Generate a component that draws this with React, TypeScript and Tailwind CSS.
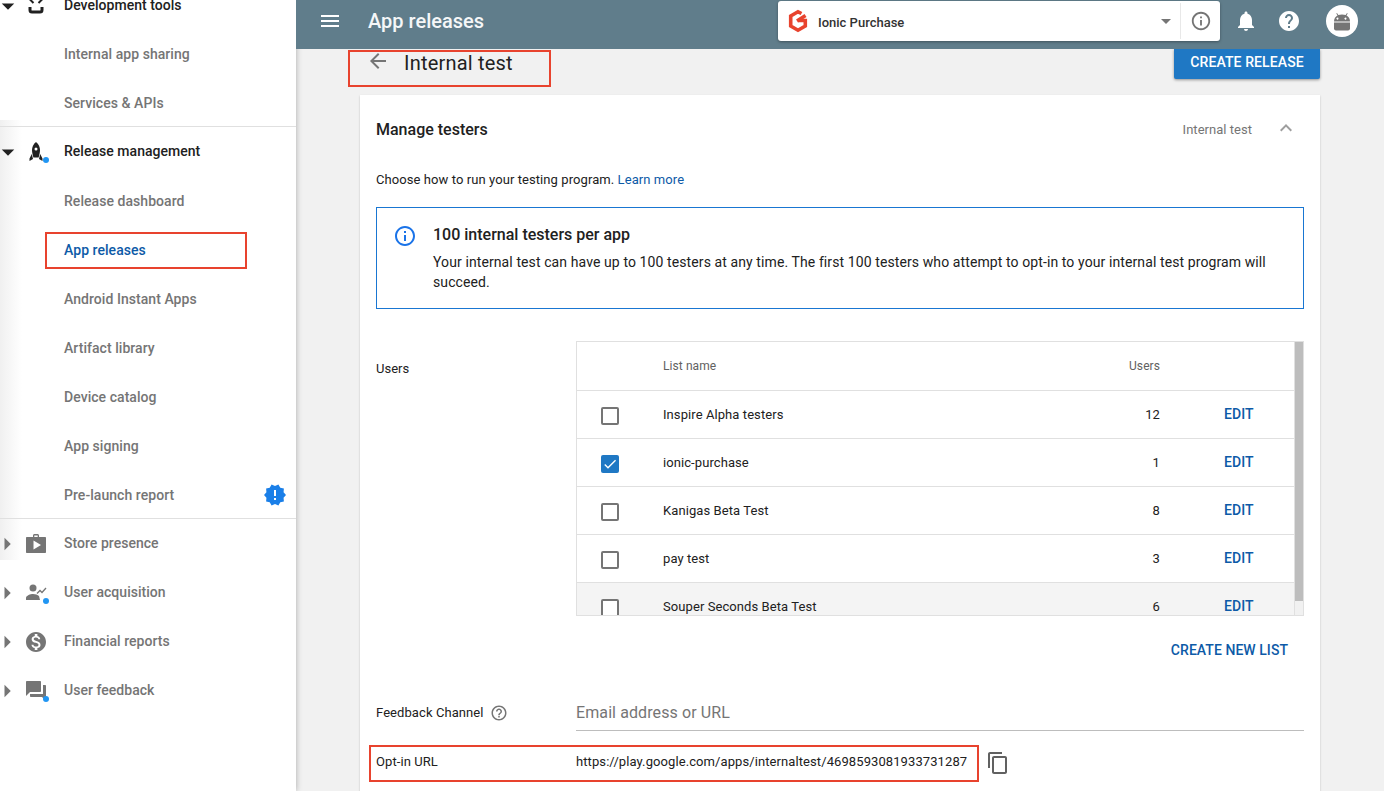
import React from "react";
import {
  MdMenu, MdArrowBack, MdNotifications, MdHelp, MdInfoOutline, MdContentCopy,
  MdMonetizationOn, MdForum, MdKeyboardArrowUp, MdArrowDropDown, MdArrowRight,
  MdNewReleases, MdHelpOutline, MdCheck,
} from "react-icons/md";

const Dot = () => <span className="absolute right-[-1px] bottom-[1px] w-[6px] h-[6px] rounded-full bg-[#2196f3]" />;

const Rocket = () => (
  <svg viewBox="0 0 24 24" className="w-6 h-6 text-[#212121]" fill="currentColor">
    <path d="M12 2c2.800 2.200 4 5.200 4 8 0 2.500-.7 5-1.400 7.500H9.400C8.700 15 8 12.500 8 10c0-2.800 1.200-5.800 4-8z" />
    <path d="M7.800 14 5.500 18.500 5.500 21 9 19zM16.200 14 18.500 18.500 18.500 21 15 19z" />
    <circle cx="12" cy="9" r="1.500" fill="#fff" />
  </svg>
);
const Code = () => (
  <svg viewBox="0 0 24 24" className="w-6 h-6 text-[#212121]" fill="none" stroke="currentColor" strokeWidth="2">
    <path d="M9.500 1 5.500 5l4 4M14.500 1l4 4-4 4" />
    <path d="M6 13v3a2 2 0 0 0 2 2h8a2 2 0 0 0 2-2v-3" strokeWidth="3" />
  </svg>
);
const Store = () => (
  <svg viewBox="0 0 24 24" className="w-6 h-6 text-[#757575]" fill="currentColor">
    <path fillRule="evenodd" d="M9 5V3.500C9 2.700 9.700 2 10.500 2h3c.8 0 1.500.7 1.500 1.500V5h6c.6 0 1 .4 1 1v14c0 .6-.4 1-1 1H3c-.6 0-1-.4-1-1V6c0-.6.4-1 1-1h6zm1.300 0h3.400V3.500h-3.400V5zM9.500 8.500v9l7.500-4.500-7.500-4.500z" />
  </svg>
);
const Acquisition = () => (
  <svg viewBox="0 0 24 24" className="w-6 h-6 text-[#757575]" fill="currentColor">
    <circle cx="9" cy="7" r="3.500" />
    <path d="M2 19v-2c0-2.500 4.500-4 7-4s4.500.8 6 2l1 4z" />
    <path d="M13 12.500l3-3 2 2 4-4.500" fill="none" stroke="currentColor" strokeWidth="1.300" />
  </svg>
);

function Head({ label, open, dark, icon, dot, cls = "h-[49px]" }: { label: string; open?: boolean; dark?: boolean; icon: React.ReactNode; dot?: boolean; cls?: string }) {
  return (
    <div className={`flex items-center ${cls}`}>
      {open ? (
        <MdArrowDropDown className="w-[30px] h-[30px] shrink-0 ml-[-7px] text-[#212121]" />
      ) : (
        <MdArrowRight className="w-[30px] h-[30px] shrink-0 ml-[-8px] mr-[1px] text-[#757575]" />
      )}
      <span className="relative w-6 h-6 ml-[1px] mr-[16px] shrink-0">{icon}{dot && <Dot />}</span>
      <span className={`text-[14px] font-medium tracking-[0.03px] ${dark ? "text-[#212121]" : "text-[#757575]"}`}>{label}</span>
    </div>
  );
}
function Sub({ label, active, children, cls = "h-[49px]" }: { label: string; active?: boolean; children?: React.ReactNode; cls?: string }) {
  return (
    <div className={`flex items-center justify-between pl-[64px] pr-[9px] ${cls}`}>
      <span className={`text-[14px] font-medium tracking-[0.05px] ${active ? "text-[#0d5aa7]" : "text-[#757575]"}`}>{label}</span>
      {children}
    </div>
  );
}

const rows = [
  { name: "Inspire Alpha testers", n: "12" },
  { name: "ionic-purchase", n: "1", checked: true },
  { name: "Kanigas Beta Test", n: "8" },
  { name: "pay test", n: "3" },
  { name: "Souper Seconds Beta Test", n: "6", hover: true },
];

function Sidebar() {
  return (
    <aside className="relative z-10 w-[296px] shrink-0 h-full bg-white overflow-hidden shadow-[0_0_6px_rgba(0,0,0,0.3)]">
      <div className="absolute left-0 top-[120px] w-[22px] h-[440px] bg-gradient-to-r from-[#f0f0f0] to-transparent" />
      <div className="relative mt-[-19px]">
        <Head label="Development tools" open dark icon={<Code />} />
        <Sub label="Internal app sharing" />
        <Sub label="Services & APIs" />
        <div className="h-px bg-[#e0e0e0] mt-[-2px]" />
        <Head label="Release management" open dark icon={<Rocket />} dot cls="h-[50px] pb-[1px]" />
        <Sub label="Release dashboard" />
        <Sub label="App releases" active />
        <Sub label="Android Instant Apps" />
        <Sub label="Artifact library" />
        <Sub label="Device catalog" />
        <Sub label="App signing" />
        <Sub label="Pre-launch report">
          <MdNewReleases className="w-[24px] h-[24px] text-[#1a7fe8] mt-[-2px]" />
        </Sub>
        <div className="h-px bg-[#e0e0e0] mt-[-2px]" />
        <Head label="Store presence" icon={<Store />} />
        <Head label="User acquisition" icon={<Acquisition />} dot />
        <Head label="Financial reports" icon={<MdMonetizationOn className="w-6 h-6 text-[#757575]" />} />
        <Head label="User feedback" icon={<MdForum className="w-6 h-6 text-[#757575]" />} dot />
      </div>
      <div className="absolute left-[45px] top-[232px] w-[202px] h-[37px] border-2 border-[#e8432e]" />
    </aside>
  );
}

function Header() {
  return (
    <header className="relative z-10 h-[49px] shrink-0 bg-[#607d8b] flex items-center pl-[22px] pr-[26px] pb-[7px] text-white">
      <MdMenu className="w-6 h-6 mr-[26px]" />
      <span className="text-[20px] font-medium text-[#f5f7f8]">App releases</span>
      <div className="ml-auto w-[442px] h-[40px] rounded-[3px] bg-white shadow-[0_1px_3px_rgba(0,0,0,0.35)] flex items-center pl-[8px] text-[#212121]">
        <svg viewBox="0 0 24 24" className="w-[24px] h-[24px] shrink-0" fill="none" stroke="#e8432e" strokeWidth="3.600">
          <path d="M15.500 4.500 12 2.800 4.700 7v10l7.300 4.200 7.300-4.200v-5.500H12" />
          <path d="M19.500 6.500 11 12" />
        </svg>
        <span className="ml-[8px] mt-[3px] text-[13px] font-medium text-[#333]">Ionic Purchase</span>
        <MdArrowDropDown className="ml-auto w-6 h-6 text-[#757575]" />
        <div className="ml-[2px] w-px h-[36px] bg-[#e8e8e8]" />
        <MdInfoOutline className="ml-[9px] mr-[8px] w-[22px] h-[22px] text-[#757575]" />
      </div>
      <MdNotifications className="ml-[14px] w-6 h-6 text-white" />
      <MdHelp className="ml-[19px] w-6 h-6 text-white" />
      <div className="ml-[25px] w-[32px] h-[32px] rounded-full bg-white flex items-center justify-center">
        <svg viewBox="0 0 24 24" className="w-[24px] h-[24px]" fill="#757575">
          <path d="M4 13.500h16v6a2 2 0 0 1-2 2H6a2 2 0 0 1-2-2z" />
          <path fillRule="evenodd" d="M4 12.500c0-3 1.500-5 3.500-6L6.300 4.400l.7-.4 1.300 2.100c1.100-.4 2.400-.6 3.700-.6s2.600.2 3.700.6L17 4l.7.4-1.200 2.100c2 1 3.500 3 3.500 6zM8.500 9.500a1 1 0 1 0 0 .1zm8 0a1 1 0 1 0 0 .1z" />
        </svg>
      </div>
    </header>
  );
}

function Table() {
  return (
    <div className="relative w-[728px] h-[275px] border border-[#e0e0e0] overflow-hidden text-[13px] tracking-[0.08px]">
      <div className="absolute right-0 top-0 bottom-0 w-[9px] bg-[#f1f1f1] border-l border-[#e0e0e0]">
        <div className="h-[259px] bg-[#bdbdbd]" />
      </div>
      <div className="flex items-center h-[49px] text-[12px] text-[#616161] border-b border-[#e0e0e0]">
        <span className="ml-[86px] flex-1">List name</span>
        <span className="w-[60px] text-right mr-[143px]">Users</span>
      </div>
      {rows.map((r) => (
        <div key={r.name} className={`flex items-center h-[48px] border-b border-[#e0e0e0] ${r.hover ? "bg-[#f4f4f4]" : ""}`}>
          <span className={`ml-[24px] mt-[2px] w-[18px] h-[18px] rounded-[2px] flex items-center justify-center ${r.checked ? "bg-[#1f78c4]" : "border-2 border-[#757575] bg-white"}`}>
            {r.checked && <MdCheck className="w-[16px] h-[16px] text-white" />}
          </span>
          <span className="ml-[44px] flex-1 text-[#212121]">{r.name}</span>
          <span className="w-[60px] text-right text-[#212121]">{r.n}</span>
          <span className="w-[143px] pl-[64px] text-[14px] font-medium text-[#0d5aa7]">EDIT</span>
        </div>
      ))}
    </div>
  );
}

function Card() {
  return (
    <section className="mt-[16px] w-[960px] bg-white shadow-[0_1px_2px_rgba(0,0,0,0.2)] px-[16px] flex-1 text-[#212121] relative">
      <div className="flex items-center h-[68px] pt-[2px]">
        <span className="text-[16px] font-medium">Manage testers</span>
        <span className="ml-auto text-[13px] tracking-[0.03px] text-[#757575]">Internal test</span>
        <MdKeyboardArrowUp className="ml-[22px] mr-[6px] mt-[-4px] w-6 h-6 text-[#9e9e9e]" />
      </div>
      <p className="mt-[8px] text-[13px] leading-[18px] tracking-[0.08px]">
        Choose how to run your testing program. <span className="text-[#0d5aa7]">Learn more</span>
      </p>
      <div className="mt-[18px] h-[102px] w-[928px] border border-[#1976d2] flex pl-[16px] pr-[24px] pt-[16px]">
        <MdInfoOutline className="w-6 h-6 text-[#1a73e8] shrink-0" />
        <div className="ml-[16px]">
          <h3 className="text-[16px] font-medium leading-[22px]">100 internal testers per app</h3>
          <p className="mt-[6px] text-[14px] leading-[20px] tracking-[0.1px]">
            Your internal test can have up to 100 testers at any time. The first 100 testers who attempt to opt-in to your internal test program will succeed.
          </p>
        </div>
      </div>
      <div className="mt-[32px] flex">
        <span className="w-[200px] pt-[18px] text-[13px]">Users</span>
        <Table />
      </div>
      <div className="h-[68px] flex items-center justify-end pr-[16px] text-[14px] font-medium tracking-[0.05px] text-[#0d5aa7]">CREATE NEW LIST</div>
      <div className="flex h-[46px] items-start">
        <span className="w-[200px] pt-[20px] text-[13px] flex items-center leading-[18px] tracking-[0.08px]">
          Feedback Channel
          <MdHelpOutline className="ml-[6px] w-[18px] h-[18px] text-[#757575]" />
        </span>
        <div className="w-[728px] h-[47px] border-b border-[#bdbdbd] pt-[18px] text-[16px] leading-[22px] tracking-[0.1px] text-[#757575]">Email address or URL</div>
      </div>
      <div className="flex items-center h-[64px]">
        <span className="w-[200px] text-[13px] tracking-[0.08px]">Opt-in URL</span>
        <span className="text-[13px] tracking-[0.09px]">https://play.google.com/apps/internaltest/4698593081933731287</span>
        <MdContentCopy className="ml-[19px] mt-[1px] w-6 h-6 text-[#616161]" />
      </div>
      <div className="absolute left-[9px] top-[650px] w-[610px] h-[37px] border-2 border-[#e8432e]" />
    </section>
  );
}

export default function App() {
  return (
    <div className="flex h-[791px] w-[1384px] overflow-hidden bg-[#f1f1f1] font-['Roboto',sans-serif]">
      <Sidebar />
      <div className="flex-1 flex flex-col min-w-0 relative">
        <Header />
        <main className="flex-1 flex flex-col pl-[64px] min-h-0">
          <div className="relative h-[30px] w-[960px] flex items-start">
            <MdArrowBack className="ml-[6px] mt-0 w-[24px] h-[24px] text-[#757575]" />
            <span className="ml-[14px] mt-[1px] text-[20px] leading-[26px] tracking-[0.2px] text-[#212121]">Internal test</span>
            <button className="ml-auto mr-0 h-[30px] w-[146px] pb-[4px] bg-[#1f78c4] text-white text-[14px] font-medium tracking-[0.1px] rounded-b-[2px] shadow-[0_1px_3px_rgba(0,0,0,0.4)]">CREATE RELEASE</button>
            <div className="absolute left-[-12px] top-[1px] w-[203px] h-[37px] border-2 border-[#e8432e]" />
          </div>
          <Card />
        </main>
      </div>
    </div>
  );
}
